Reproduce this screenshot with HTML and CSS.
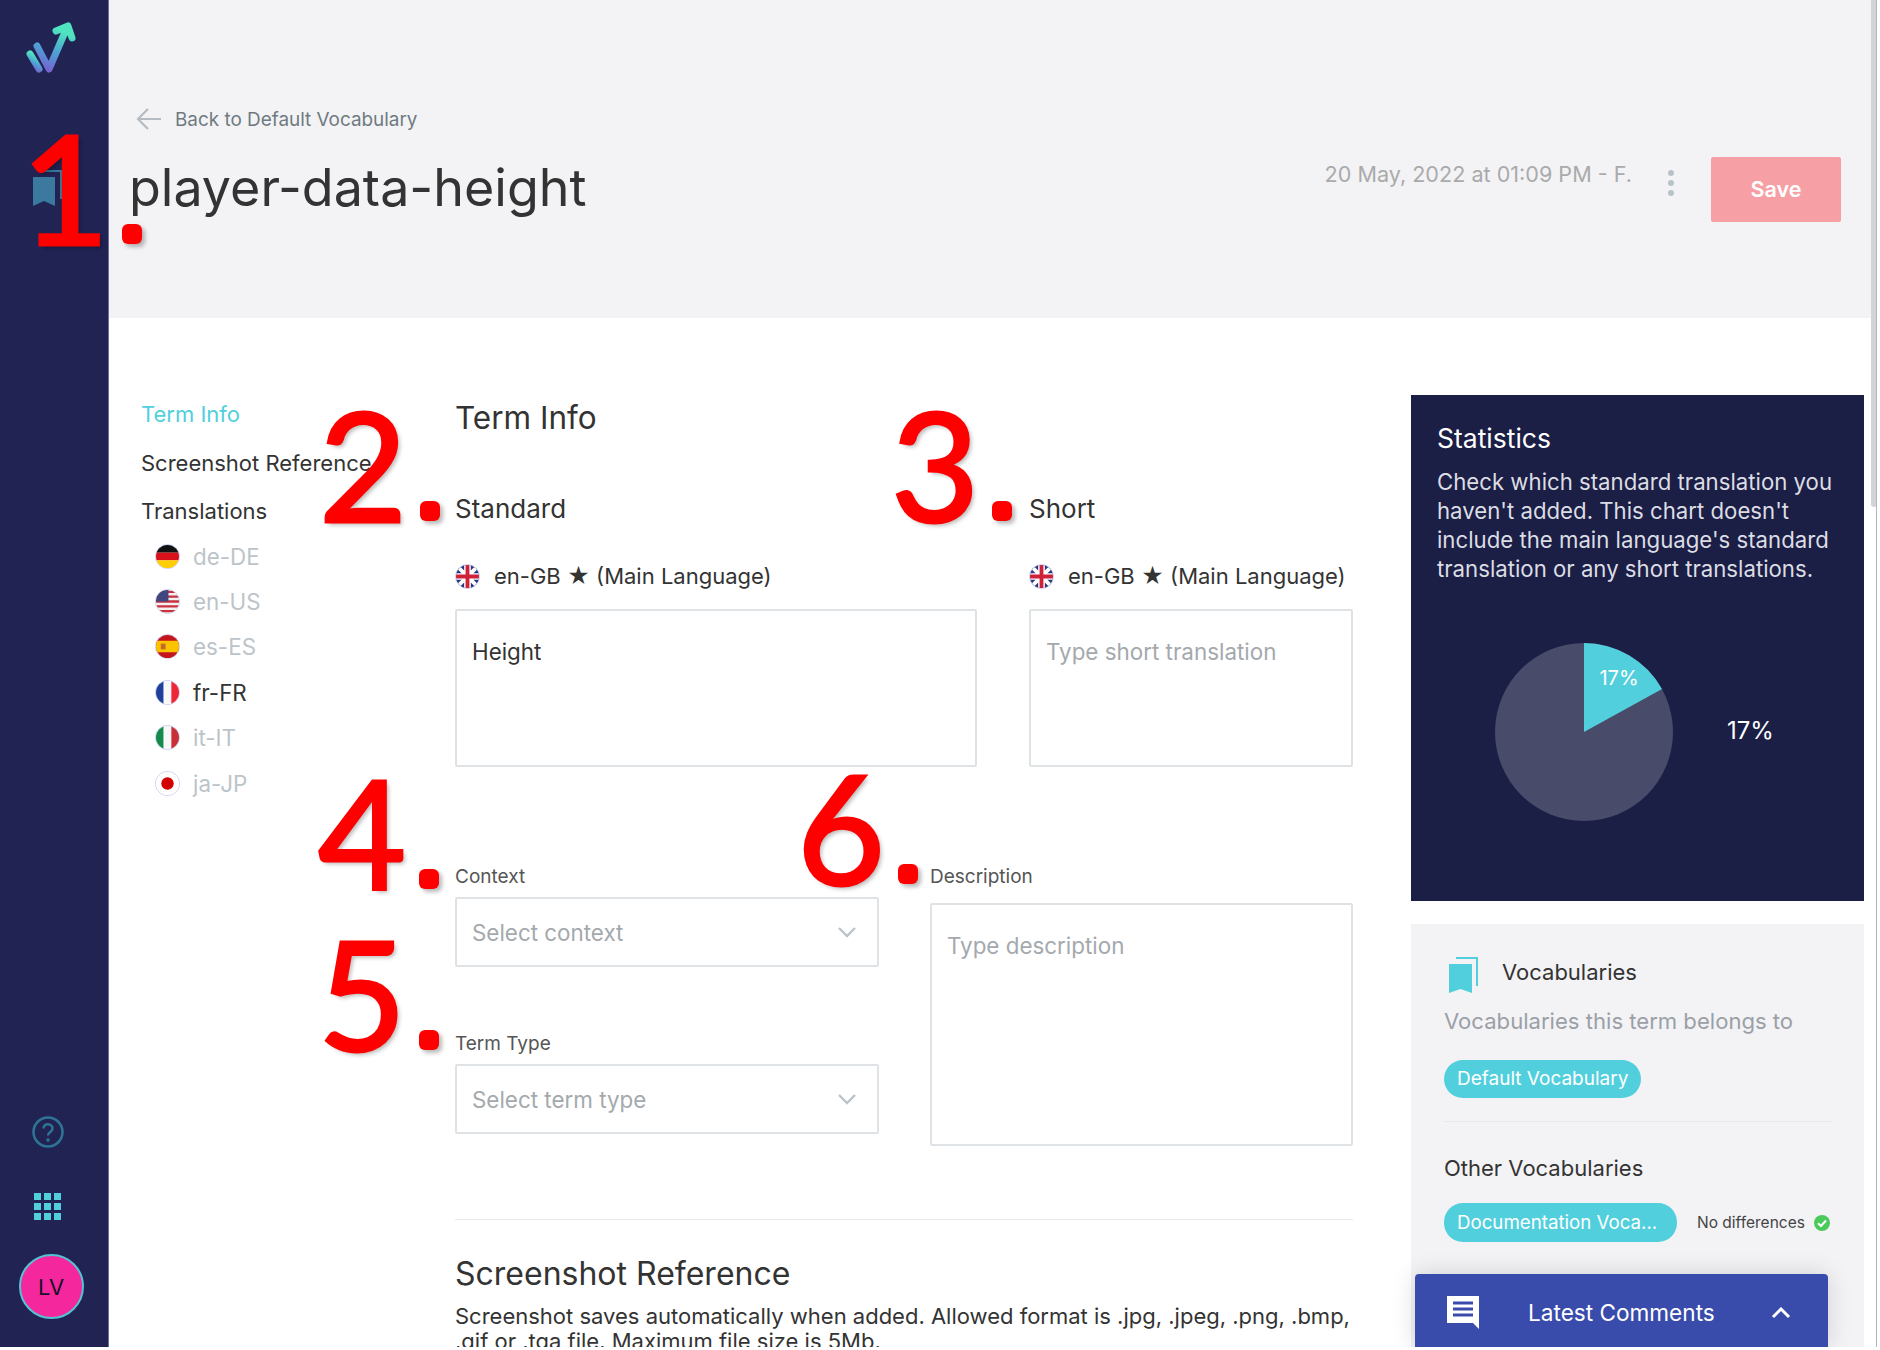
FILE: index.html
```html
<!DOCTYPE html>
<html lang="en">
<head>
<meta charset="utf-8">
<title>player-data-height</title>
<link rel="stylesheet" href="styles.css">
</head>
<body>
<div class="app">
  <aside class="sidebar">
    <svg class="logo" viewBox="0 0 80 80" width="80" height="80" aria-hidden="true">
      <defs>
        <linearGradient id="lg" x1="0" y1="1" x2="0.35" y2="0">
          <stop offset="0" stop-color="#7a5bd0"/>
          <stop offset="0.5" stop-color="#4f9fd6"/>
          <stop offset="1" stop-color="#4fe3bf"/>
        </linearGradient>
      </defs>
      <g fill="none" stroke="url(#lg)" stroke-width="7" stroke-linecap="round" stroke-linejoin="round">
        <path d="M24 46 L33 61"/>
        <path d="M31 38 L43 61 L59 24 M50 23 L62 18 L66 30"/>
      </g>
    </svg>
    <svg class="side-book" viewBox="0 0 30 36" width="30" height="36" aria-hidden="true">
      <path d="M7 0 H29 V29 H27 V2 H7Z" fill="#36789b"/>
      <path d="M0 7 H22 V36 L11 31 L0 36Z" fill="#3b7a9e"/>
    </svg>
    <div class="side-bottom">
      <svg class="help" viewBox="0 0 32 32" width="32" height="32" aria-hidden="true">
        <circle cx="16" cy="16" r="14.5" fill="none" stroke="#2f7495" stroke-width="2.5"/>
        <path d="M11.5 12.5 C11.5 6.5 20.5 7 20.5 12.5 C20.5 16 16 16 16 19.5" fill="none" stroke="#2f7495" stroke-width="2.5"/>
        <circle cx="16" cy="24" r="1.8" fill="#2f7495"/>
      </svg>
      <div class="apps"><i></i><i></i><i></i><i></i><i></i><i></i><i></i><i></i><i></i></div>
      <div class="avatar">LV</div>
    </div>
  </aside>

  <main class="main">
    <header class="page-head">
      <div class="head-left">
        <a class="back">
          <svg viewBox="0 0 26 24" width="26" height="24" aria-hidden="true"><path d="M25 12 H2 M12 2 L2 12 L12 22" fill="none" stroke="#b4bcc2" stroke-width="2.2"/></svg>
          <span>Back to Default Vocabulary</span>
        </a>
        <h1 class="title">player-data-height</h1>
      </div>
      <div class="head-right">
        <span class="date">20 May, 2022 at 01:09 PM - F.</span>
        <span class="kebab"><i></i><i></i><i></i></span>
        <button class="save">Save</button>
      </div>
    </header>

    <div class="content">
      <nav class="nav">
        <div class="nav-item active">Term Info</div>
        <div class="nav-item">Screenshot Reference</div>
        <div class="nav-item">Translations</div>
        <ul class="langs">
          <li class="lang"><svg class="flag" viewBox="0 0 24 24" aria-hidden="true"><rect width="24" height="8" fill="#111"/><rect y="8" width="24" height="8" fill="#d8111a"/><rect y="16" width="24" height="8" fill="#ffce00"/></svg>de-DE</li>
          <li class="lang"><svg class="flag" viewBox="0 0 24 24" aria-hidden="true"><rect width="24" height="24" fill="#f4f0f0"/><path d="M0 2h24M0 7h24M0 12h24M0 17h24M0 22h24" stroke="#c9323f" stroke-width="2.4"/><rect width="13" height="12" fill="#42467e"/></svg>en-US</li>
          <li class="lang"><svg class="flag" viewBox="0 0 24 24" aria-hidden="true"><rect width="24" height="24" fill="#c4141c"/><rect y="6" width="24" height="12" fill="#fcc400"/><rect x="5" y="9" width="5" height="6" fill="#c26a2a"/></svg>es-ES</li>
          <li class="lang on"><svg class="flag" viewBox="0 0 24 24" aria-hidden="true"><rect width="8" height="24" fill="#1f3f9c"/><rect x="8" width="8" height="24" fill="#f8f8f8"/><rect x="16" width="8" height="24" fill="#ee2737"/></svg>fr-FR</li>
          <li class="lang"><svg class="flag" viewBox="0 0 24 24" aria-hidden="true"><rect width="8" height="24" fill="#148a4c"/><rect x="8" width="8" height="24" fill="#f8f8f8"/><rect x="16" width="8" height="24" fill="#c92f36"/></svg>it-IT</li>
          <li class="lang"><svg class="flag" viewBox="0 0 24 24" aria-hidden="true"><rect width="24" height="24" fill="#fff"/><circle cx="12" cy="12" r="6.5" fill="#d20000"/></svg>ja-JP</li>
        </ul>
      </nav>

      <section class="form">
        <h2 class="form-title">Term Info</h2>
        <div class="trans-grid">
          <div>
            <h3 class="col-title">Standard</h3>
            <div class="lang-row">
              <svg class="flag" viewBox="0 0 24 24" aria-hidden="true"><rect width="24" height="24" fill="#26357f"/><path d="M0 0L24 24M24 0L0 24" stroke="#fff" stroke-width="4"/><path d="M12 0V24M0 12H24" stroke="#fff" stroke-width="7"/><path d="M12 0V24M0 12H24" stroke="#d0213a" stroke-width="4"/></svg>
              <span>en-GB ★ (Main Language)</span>
            </div>
            <div class="box box-std">Height</div>
          </div>
          <div>
            <h3 class="col-title">Short</h3>
            <div class="lang-row">
              <svg class="flag" viewBox="0 0 24 24" aria-hidden="true"><rect width="24" height="24" fill="#26357f"/><path d="M0 0L24 24M24 0L0 24" stroke="#fff" stroke-width="4"/><path d="M12 0V24M0 12H24" stroke="#fff" stroke-width="7"/><path d="M12 0V24M0 12H24" stroke="#d0213a" stroke-width="4"/></svg>
              <span>en-GB ★ (Main Language)</span>
            </div>
            <div class="box box-std ph">Type short translation</div>
          </div>
        </div>
        <div class="meta-grid">
          <div>
            <label class="field-label">Context</label>
            <div class="select ph">Select context
              <svg viewBox="0 0 20 12" width="20" height="12" aria-hidden="true"><path d="M2 2 L10 10 L18 2" fill="none" stroke="#bcc3c8" stroke-width="2.4"/></svg>
            </div>
            <label class="field-label second">Term Type</label>
            <div class="select ph">Select term type
              <svg viewBox="0 0 20 12" width="20" height="12" aria-hidden="true"><path d="M2 2 L10 10 L18 2" fill="none" stroke="#bcc3c8" stroke-width="2.4"/></svg>
            </div>
          </div>
          <div>
            <label class="field-label">Description</label>
            <div class="box box-desc ph">Type description</div>
          </div>
        </div>
        <hr class="rule">
        <h2 class="form-title shot">Screenshot Reference</h2>
        <p class="shot-text">Screenshot saves automatically when added. Allowed format is .jpg, .jpeg, .png, .bmp, .gif or .tga file. Maximum file size is 5Mb.</p>
      </section>

      <aside class="side">
        <div class="stats">
          <h3 class="stats-title">Statistics</h3>
          <p class="stats-text">Check which standard translation you haven't added. This chart doesn't include the main language's standard translation or any short translations.</p>
          <div class="chart">
            <svg class="pie" viewBox="0 0 178 178" width="178" height="178" aria-hidden="true">
              <circle cx="89" cy="89" r="89" fill="#484b69"/>
              <path d="M89 89 V0 A89 89 0 0 1 167 46.1 Z" fill="#52cfdd"/>
              <text x="124" y="42" class="pie-label">17%</text>
            </svg>
            <span class="chart-pct">17%</span>
          </div>
        </div>
        <div class="vocab">
          <div class="vocab-head">
            <svg viewBox="0 0 30 36" width="30" height="36" aria-hidden="true">
              <path d="M7 0 H29 V29 H27 V2 H7Z" fill="#52cfdd"/>
              <path d="M0 7 H23 V36 L11.5 32 L0 36Z" fill="#52cfdd"/>
            </svg>
            <span>Vocabularies</span>
          </div>
          <div class="vocab-sub">Vocabularies this term belongs to</div>
          <span class="chip chip-a">Default Vocabulary</span>
          <hr class="vocab-rule">
          <div class="vocab-other">Other Vocabularies</div>
          <div class="other-row">
            <span class="chip chip-b">Documentation Voca...</span>
            <span class="diff">No differences</span>
            <svg viewBox="0 0 16 16" width="16" height="16" aria-hidden="true"><circle cx="8" cy="8" r="8" fill="#4bca5c"/><path d="M4 8.2 L7 11 L12 5.5" fill="none" stroke="#fff" stroke-width="2"/></svg>
          </div>
        </div>
      </aside>
    </div>

    <div class="comments">
      <svg viewBox="0 0 34 33" width="34" height="33" aria-hidden="true">
        <path d="M1 0 H33 V33 L27 27 H1Z" fill="#fff"/>
        <path d="M7 7 H27 M7 13 H27 M7 19 H27" stroke="#3a4cab" stroke-width="3"/>
      </svg>
      <span class="comments-label">Latest Comments</span>
      <svg viewBox="0 0 20 12" width="20" height="12" aria-hidden="true"><path d="M2 10 L10 2 L18 10" fill="none" stroke="#fff" stroke-width="3"/></svg>
    </div>
    <div class="scroll-thumb"></div>
    <div class="scroll-line"></div>
  </main>

  <div class="mark mark-1">1<span class="mark-dot">.</span></div>
  <div class="mark mark-2">2<span class="mark-dot">.</span></div>
  <div class="mark mark-3">3<span class="mark-dot">.</span></div>
  <div class="mark mark-4">4<span class="mark-dot">.</span></div>
  <div class="mark mark-5">5<span class="mark-dot">.</span></div>
  <div class="mark mark-6">6<span class="mark-dot">.</span></div>
</div>
</body>
</html>
```
FILE: styles.css
```css
* { box-sizing: border-box; }
html, body { margin: 0; padding: 0; background: #fff; }
body { width: 1880px; height: 1350px; overflow: hidden; font-family: Inter, Roboto, "Liberation Sans", sans-serif; color: #333; }
.app { position: relative; display: flex; width: 1878px; height: 1347px; overflow: hidden; }

.sidebar { width: 109px; flex: none; background: #212353; border-right: 1px solid #6d6f9c; display: flex; flex-direction: column; }
.logo { display: block; margin: 8px 0 0 6px; }
.side-book { display: block; margin: 82px 0 0 33px; }
.side-bottom { margin-top: auto; display: flex; flex-direction: column; align-items: center; padding-bottom: 28px; }
.help { margin-left: -13px; }
.apps { display: grid; grid-template-columns: repeat(3, 7px); grid-auto-rows: 7px; gap: 3px; margin: 45px 0 0 -13px; }
.apps i { background: #52cfdd; display: block; }
.avatar { width: 65px; height: 65px; margin: 34px 0 0 -6px; border-radius: 50%; background: #f5279c; border: 2px solid #52c4d6; color: #15102a; font-size: 22px; display: flex; align-items: center; justify-content: center; }

.main { position: relative; flex: 1; min-width: 0; overflow: hidden; }
.page-head { height: 318px; margin-right: 7px; background: #f3f3f6; padding: 107px 30px 0 21px; display: flex; justify-content: space-between; align-items: flex-start; }
.back { display: flex; align-items: center; gap: 13px; margin-left: 6px; color: #6f7a80; font-size: 18.9px; }
.title { margin: 25px 0 0 -1px; font-weight: 400; font-size: 52px; line-height: 64px; color: #333; }
.head-right { display: flex; align-items: flex-start; padding-top: 50px; }
.date { color: #aaa; font-size: 21.6px; line-height: 34px; }
.kebab { display: flex; flex-direction: column; gap: 4px; margin: 13px 0 0 36px; }
.kebab i { width: 6px; height: 6px; border-radius: 50%; background: #b9c2c8; display: block; }
.save { width: 130px; height: 65px; margin-left: 37px; padding-bottom: 3px; border: 0; border-radius: 2px; background: #f6a0a5; color: #fff; font: 600 21.5px Inter, sans-serif; }

.content { display: grid; grid-template-columns: 256px 898px 453px; column-gap: 58px; padding: 72px 0 0 32px; height: 1029px; }
.nav-item { font-size: 22px; line-height: 48.5px; white-space: nowrap; }
.nav-item.active { color: #52cfdd; }
.langs { list-style: none; margin: -2px 0 0; padding: 0 0 0 14px; }
.lang { display: flex; align-items: center; gap: 13px; height: 45.4px; font-size: 22.4px; color: #bcc4c9; }
.lang.on { color: #333; }
.flag { width: 25px; height: 25px; border-radius: 50%; border: 1px solid #c8cdf0; flex: none; }

.form { padding-top: 8px; }
.form-title { margin: 0; font-weight: 400; font-size: 31.5px; line-height: 40px; }
.trans-grid { display: grid; grid-template-columns: 522px 324px; column-gap: 52px; margin-top: 51px; }
.col-title { margin: 0; font-weight: 400; font-size: 26px; line-height: 40px; }
.lang-row { display: flex; align-items: center; gap: 14px; height: 40px; margin-top: 27px; font-size: 22px; white-space: nowrap; }
.box { border: 2px solid #e0e3e5; border-radius: 2px; padding: 23px 15px; font-size: 22.4px; line-height: 36px; }
.box-std { height: 158px; margin-top: 13px; }
.ph { color: #a4a9ad; }
.meta-grid { display: grid; grid-template-columns: 424px 423px; column-gap: 51px; margin-top: 99px; }
.field-label { display: block; font-size: 19px; line-height: 22px; color: #555; }
.field-label.second { margin-top: 66px; }
.select { height: 70px; margin-top: 9px; border: 2px solid #e0e3e5; border-radius: 2px; padding: 0 20px 0 15px; font-size: 22.4px; display: flex; align-items: center; justify-content: space-between; }
.box-desc { height: 243px; margin-top: 15px; }
.rule { border: 0; border-top: 1px solid #e6e8ea; margin: 73px 0 0; }
.form-title.shot { margin-top: 34px; font-size: 32px; }
.shot-text { margin: 10px 0 0; font-size: 22px; line-height: 25px; color: #333; }

.side { margin-top: 5px; }
.stats { height: 506px; background: #1b1e45; padding: 28px 26px; color: #fff; }
.stats-title { margin: 0; font-weight: 400; font-size: 26.5px; line-height: 30px; }
.stats-text { margin: 14px 0 0; font-size: 22.2px; line-height: 29px; color: #dcdde4; }
.chart { display: flex; align-items: center; gap: 54px; margin: 60px 0 0 58px; }
.pie { display: block; }
.pie-label { fill: #fff; font-size: 20px; text-anchor: middle; }
.chart-pct { font-size: 24px; margin-top: -3px; }
.vocab { height: 423px; margin-top: 23px; background: #f3f3f6; padding: 33px 33px 0; }
.vocab-head { display: flex; align-items: flex-start; gap: 23px; margin-left: 5px; font-size: 22px; line-height: 30px; }
.vocab-sub { margin-top: 13px; font-size: 22.1px; line-height: 30px; color: #9aa0a6; }
.chip { display: inline-block; height: 38px; border-radius: 19px; background: #52cfdd; color: #fff; padding: 0 13px; font-size: 19px; line-height: 38px; white-space: nowrap; }
.chip-a { width: 197px; margin-top: 24px; vertical-align: top; }
.vocab-rule { border: 0; border-top: 1px solid #e8e8ec; margin: 23px 0 0; width: 388px; }
.vocab-other { margin-top: 31px; font-size: 22px; line-height: 30px; }
.other-row { display: flex; align-items: center; margin-top: 20px; }
.chip-b { width: 233px; height: 39px; line-height: 39px; font-size: 18.7px; }
.diff { margin: 0 9px 0 20px; font-size: 15.5px; color: #444; white-space: nowrap; }

.comments { position: absolute; left: 1306px; top: 1274px; width: 413px; height: 73px; background: #3a4cab; border-radius: 4px 4px 0 0; box-shadow: 0 0 24px rgba(0,0,0,.14); padding: 4px 37px 0 31px; display: flex; align-items: center; color: #fff; }
.comments-label { font-size: 22.6px; margin: 0 auto 0 48px; }
.scroll-thumb { position: absolute; top: 0; left: 1762px; width: 6px; height: 507px; background: #d2d5d8; border-radius: 0 0 3px 3px; }
.scroll-line { position: absolute; top: 0; left: 1767px; width: 1px; height: 1347px; background: #b5b7ba; }

.mark { position: absolute; font-family: Lato, "Noto Sans", sans-serif; font-weight: 400; font-size: 152px; line-height: 1; color: #fe0000; -webkit-text-stroke: 3px #fe0000; text-shadow: 3px 3px 4px rgba(0,0,0,.28); white-space: nowrap; }
.mark-dot { display: inline-block; width: 20px; height: 20px; margin-left: 13px; border-radius: 6px; background: #fe0000; box-shadow: 3px 3px 4px rgba(0,0,0,.28); font-size: 20px; line-height: 20px; text-shadow: none; -webkit-text-stroke: 0; vertical-align: 3px; }
.mark-1 { left: 21px; top: 110px; }
.mark-2 { left: 319px; top: 387px; }
.mark-3 { left: 891px; top: 387px; }
.mark-4 { left: 318px; top: 755px; }
.mark-5 { left: 318px; top: 916px; }
.mark-6 { left: 797px; top: 750px; }
```
